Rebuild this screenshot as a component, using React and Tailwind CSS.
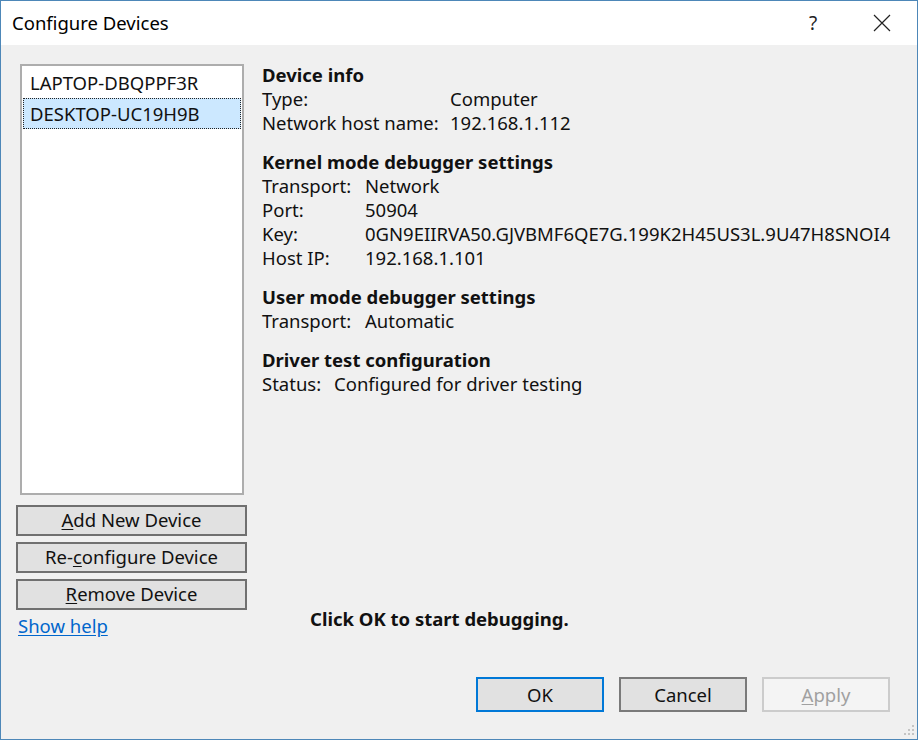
import React from "react";

const font = { fontFamily: '"Noto Sans", "Open Sans", sans-serif' };

const Section = ({ title, rows, labelWidth, className = "" }) => (
	<div className={className}>
		<div className="font-bold">{title}</div>
		{rows.map(([label, value]) => (
			<div key={label} className="flex">
				<div className={labelWidth}>{label}</div>
				<div>{value}</div>
			</div>
		))}
	</div>
);

const SideButton = ({ children }) => (
	<button className="h-[31px] w-full bg-[#e1e1e1] border-2 border-[#707070] text-[#111] leading-none">
		{children}
	</button>
);

const App = () => {
	return (
		<div
			className="w-[918px] h-[740px] border border-[#4d87b8] flex flex-col text-[18.5px] text-[#111] overflow-hidden"
			style={font}
		>
			{/* Title bar */}
			<div className="h-[44px] bg-white flex items-center pl-[11px] shrink-0">
				<div className="flex-1 text-[18.5px] text-black">Configure Devices</div>
				<div className="w-[40px] text-center text-[19px] text-[#222] mr-[40px]">?</div>
				<svg width="18" height="18" viewBox="0 0 18 18" className="mr-[26px]">
					<path d="M1 1 L17 17 M17 1 L1 17" stroke="#222" strokeWidth="1.2" />
				</svg>
			</div>

			{/* Body */}
			<div className="flex-1 bg-[#f0f0f0] relative flex flex-col">
				<div className="flex pt-[19px]">
					{/* Left column */}
					<div className="w-[231px] ml-[15px] flex flex-col">
						<div className="ml-[4px] mr-[3px] h-[431px] bg-white border-2 border-[#adadad] p-[1px]">
							<div className="h-[31px] flex items-center pl-[7px]">LAPTOP-DBQPPF3R</div>
							<div className="h-[31px] flex items-center pl-[6px] bg-[#cce8ff] border border-dotted border-[#222]">
								DESKTOP-UC19H9B
							</div>
						</div>
						<div className="mt-[10px] flex flex-col gap-[6px]">
							<SideButton>
								<span className="underline underline-offset-2">A</span>dd New Device
							</SideButton>
							<SideButton>
								Re-<span className="underline underline-offset-2">c</span>onfigure Device
							</SideButton>
							<SideButton>
								<span className="underline underline-offset-2">R</span>emove Device
							</SideButton>
						</div>
						<div className="mt-[4px] ml-[2px] leading-[24px] text-[#0066cc] underline underline-offset-2">
							Show help
						</div>
					</div>

					{/* Right column */}
					<div className="flex-1 ml-[15px] -mt-[1px] flex flex-col leading-[24px]">
						<Section
							title="Device info"
							labelWidth="w-[188px]"
							rows={[
								["Type:", "Computer"],
								["Network host name:", "192.168.1.112"],
							]}
						/>
						<Section
							className="mt-[15px]"
							title="Kernel mode debugger settings"
							labelWidth="w-[103px]"
							rows={[
								["Transport:", "Network"],
								["Port:", "50904"],
								["Key:", "0GN9EIIRVA50.GJVBMF6QE7G.199K2H45US3L.9U47H8SNOI4"],
								["Host IP:", "192.168.1.101"],
							]}
						/>
						<Section
							className="mt-[15px]"
							title="User mode debugger settings"
							labelWidth="w-[103px]"
							rows={[["Transport:", "Automatic"]]}
						/>
						<Section
							className="mt-[15px]"
							title="Driver test configuration"
							labelWidth="w-[72px]"
							rows={[["Status:", "Configured for driver testing"]]}
						/>
						<div className="mt-auto mb-[7px] ml-[48px] font-bold">Click OK to start debugging.</div>
					</div>
				</div>

				{/* Bottom buttons */}
				<div className="mt-[39px] flex justify-end gap-[15px] pr-[27px]">
					<button className="w-[128px] h-[35px] bg-[#e1e1e1] border-2 border-[#0078d7]">OK</button>
					<button className="w-[128px] h-[35px] bg-[#e1e1e1] border-2 border-[#7a7a7a]">Cancel</button>
					<button className="w-[128px] h-[35px] bg-[#f4f4f4] border-2 border-[#cccccc] text-[#a0a0a0]">
						<span className="underline underline-offset-2">A</span>pply
					</button>
				</div>

				{/* Resize grip */}
				<svg width="14" height="14" viewBox="0 0 14 14" className="absolute right-[2px] bottom-[2px]">
					{[
						[11, 2],
						[11, 6],
						[7, 6],
						[11, 10],
						[7, 10],
						[3, 10],
					].map(([x, y]) => (
						<rect key={`${x}-${y}`} x={x} y={y} width="2" height="2" fill="#c4c4c4" />
					))}
				</svg>
			</div>
		</div>
	);
};

export default App;
